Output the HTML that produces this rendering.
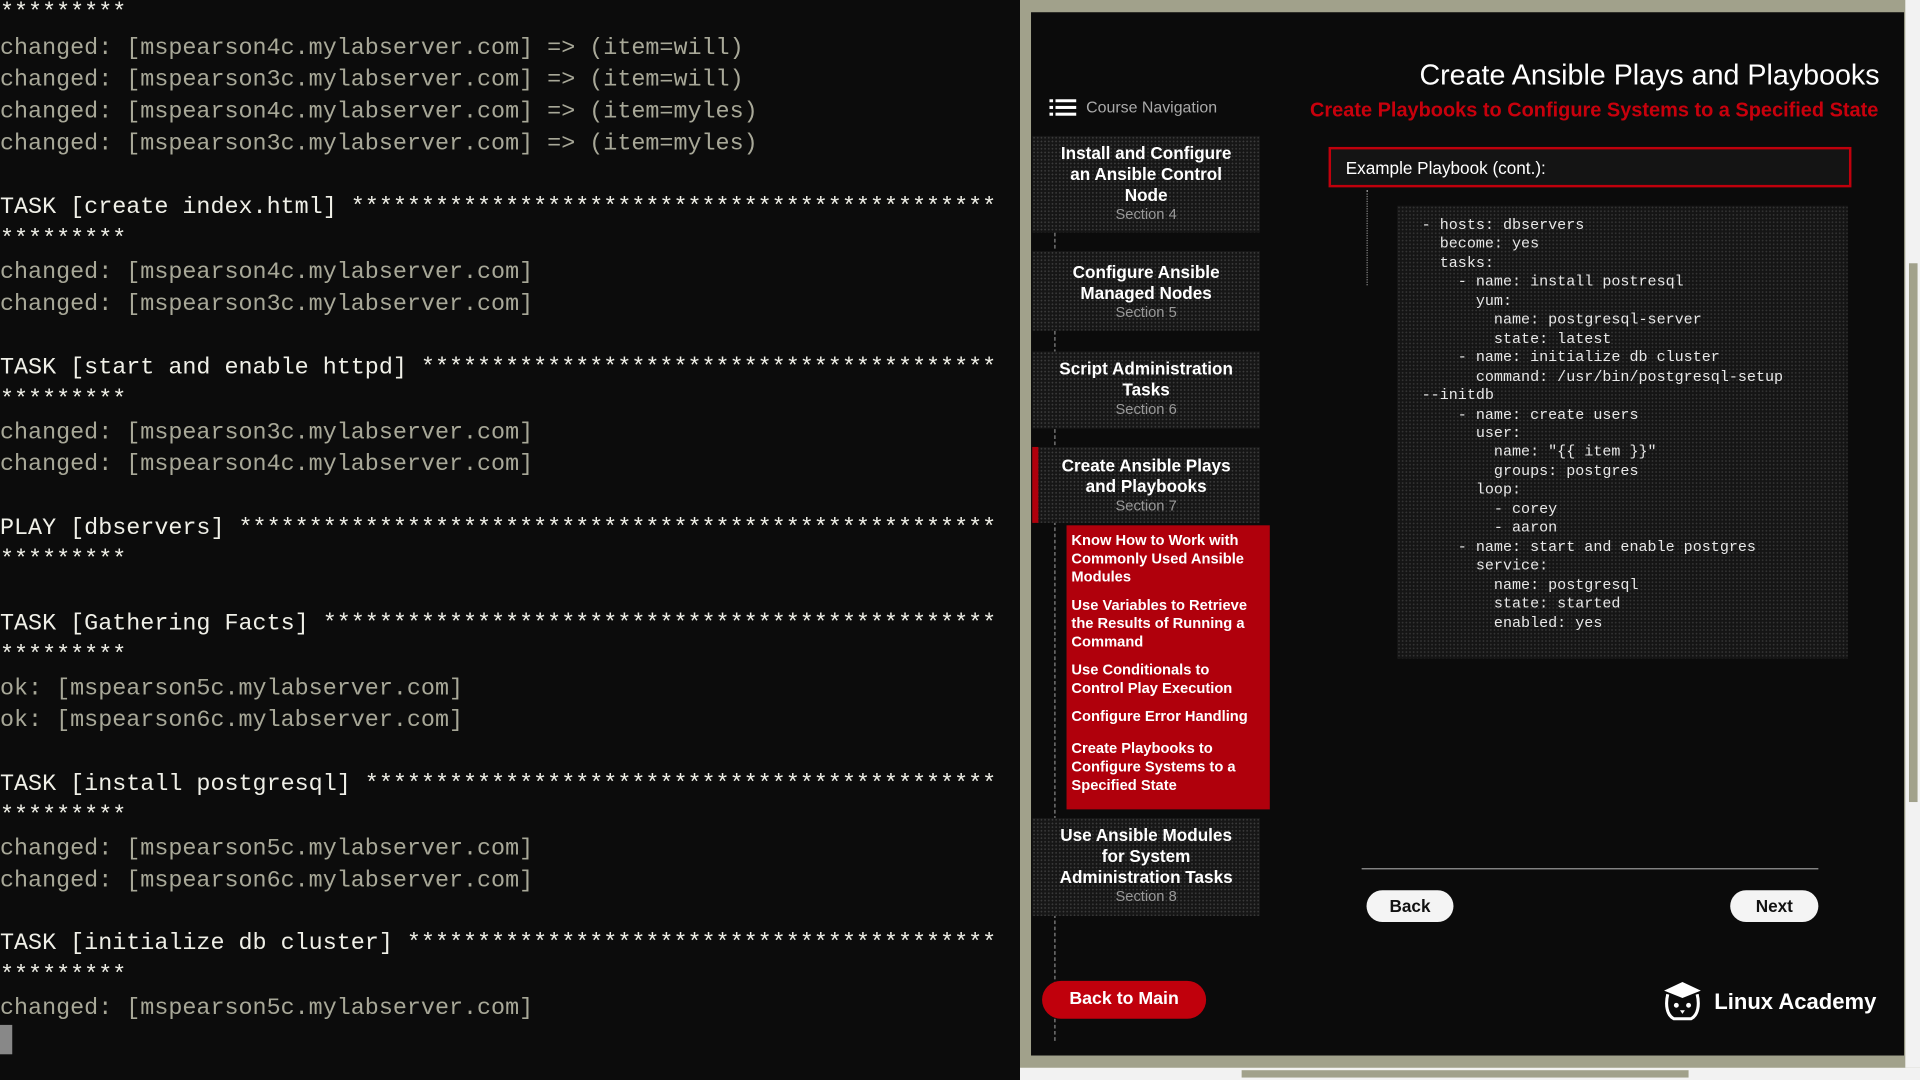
<!DOCTYPE html>
<html><head><meta charset="utf-8"><style>
*{margin:0;padding:0;box-sizing:border-box}
html,body{width:1920px;height:1080px;overflow:hidden;background:#0c0c0c}
#w{position:absolute;left:0;top:0;width:1568px;height:882px;transform:scale(1.22449);transform-origin:0 0;font-family:"Liberation Sans",sans-serif}
.t{position:absolute;left:0;font-family:"Liberation Mono",monospace;font-size:19.1px;line-height:24px;white-space:pre;color:#f0f0e8;margin-top:1px}
.s{margin-top:4px}
.g{color:#a8a898}
.a{position:absolute}
.nav{position:absolute;left:843px;width:186px;background:#161616;background-image:radial-gradient(#3a3a3a 0.6px,transparent 0.8px);background-size:3px 3px;text-align:center;color:#fff;font-weight:bold;font-size:14px;line-height:17px}
.nav span{display:block;font-weight:normal;color:#999;font-size:12px;line-height:15px}
.sub{position:absolute;left:871px;top:429px;width:166px;height:232px;background:#b0000c;color:#fff;font-weight:bold;font-size:12px;line-height:15px;padding:5px 0 0 4px}
.sub div{margin-bottom:8px}
.btn{position:absolute;background:#f4f4f4;border-radius:14px;color:#111;font-weight:bold;font-size:14px;text-align:center;line-height:26px}
</style></head><body><div id="w">
<div class="t" style="top:-3px">*********</div>
<div class="t g" style="top:26px">changed: [mspearson4c.mylabserver.com] =&gt; (item=will)</div>
<div class="t g" style="top:52px">changed: [mspearson3c.mylabserver.com] =&gt; (item=will)</div>
<div class="t g" style="top:78px">changed: [mspearson4c.mylabserver.com] =&gt; (item=myles)</div>
<div class="t g" style="top:104px">changed: [mspearson3c.mylabserver.com] =&gt; (item=myles)</div>
<div class="t" style="top:156px">TASK [create index.html] **********************************************</div>
<div class="t s" style="top:179px">*********</div>
<div class="t g" style="top:209px">changed: [mspearson4c.mylabserver.com]</div>
<div class="t g" style="top:235px">changed: [mspearson3c.mylabserver.com]</div>
<div class="t" style="top:287px">TASK [start and enable httpd] *****************************************</div>
<div class="t s" style="top:310px">*********</div>
<div class="t g" style="top:340px">changed: [mspearson3c.mylabserver.com]</div>
<div class="t g" style="top:366px">changed: [mspearson4c.mylabserver.com]</div>
<div class="t" style="top:418px">PLAY [dbservers] ******************************************************</div>
<div class="t s" style="top:441px">*********</div>
<div class="t" style="top:496px">TASK [Gathering Facts] ************************************************</div>
<div class="t s" style="top:519px">*********</div>
<div class="t g" style="top:549px">ok: [mspearson5c.mylabserver.com]</div>
<div class="t g" style="top:575px">ok: [mspearson6c.mylabserver.com]</div>
<div class="t" style="top:627px">TASK [install postgresql] *********************************************</div>
<div class="t s" style="top:650px">*********</div>
<div class="t g" style="top:680px">changed: [mspearson5c.mylabserver.com]</div>
<div class="t g" style="top:706px">changed: [mspearson6c.mylabserver.com]</div>
<div class="t" style="top:757px">TASK [initialize db cluster] ******************************************</div>
<div class="t s" style="top:780px">*********</div>
<div class="t g" style="top:810px">changed: [mspearson5c.mylabserver.com]</div>
<div class="a" style="left:0;top:837px;width:10px;height:24px;background:#888"></div>

<div class="a" style="left:833px;top:0;width:735px;height:882px;background:#a1a18b"></div>
<div class="a" style="left:833px;top:872px;width:735px;height:10px;background:#f2f2f2"></div>
<div class="a" style="left:1014px;top:874px;width:365px;height:6px;background:#a1a18b"></div>
<div class="a" style="left:1556px;top:0;width:12px;height:872px;background:#f2f2f2"></div>
<div class="a" style="left:1559px;top:215px;width:7px;height:440px;background:#a1a18b"></div>
<div class="a" style="left:842px;top:10px;width:713px;height:852px;background:#0b0b0b"></div>

<div class="a" style="right:33px;top:48px;color:#fff;font-size:23.4px;white-space:nowrap">Create Ansible Plays and Playbooks</div>
<div class="a" style="right:34px;top:81px;color:#c8000c;font-size:16.3px;font-weight:bold;white-space:nowrap">Create Playbooks to Configure Systems to a Specified State</div>

<svg class="a" style="left:857px;top:81px" width="22" height="14"><g fill="#fff"><rect x="0" y="0" width="3" height="2.5"/><rect x="5" y="0" width="17" height="2.5"/><rect x="0" y="5.5" width="3" height="2.5"/><rect x="5" y="5.5" width="17" height="2.5"/><rect x="0" y="11" width="3" height="2.5"/><rect x="5" y="11" width="17" height="2.5"/></g></svg>
<div class="a" style="left:887px;top:80px;color:#aaa;font-size:13px">Course Navigation</div>

<div class="a" style="left:861px;top:190px;height:660px;border-left:1px dashed #888"></div>
<div class="nav" style="top:111px;height:79px;padding-top:6px">Install and Configure<br>an Ansible Control<br>Node<span>Section 4</span></div>
<div class="nav" style="top:205px;height:65px;padding-top:9px">Configure Ansible<br>Managed Nodes<span>Section 5</span></div>
<div class="nav" style="top:287px;height:63px;padding-top:6px">Script Administration<br>Tasks<span>Section 6</span></div>
<div class="nav" style="top:365px;height:62px;padding-top:7px">Create Ansible Plays<br>and Playbooks<span>Section 7</span></div>
<div class="a" style="left:843px;top:365px;width:5px;height:62px;background:#b0000c"></div>
<div class="sub"><div>Know How to Work with<br>Commonly Used Ansible<br>Modules</div><div>Use Variables to Retrieve<br>the Results of Running a<br>Command</div><div>Use Conditionals to<br>Control Play Execution</div><div style="margin-bottom:11px">Configure Error Handling</div><div>Create Playbooks to<br>Configure Systems to a<br>Specified State</div></div>
<div class="nav" style="top:668px;height:80px;padding-top:6px">Use Ansible Modules<br>for System<br>Administration Tasks<span>Section 8</span></div>

<div class="a" style="left:851px;top:801px;width:134px;height:31px;border-radius:16px;background:#c0000c;color:#fff;font-size:14.5px;font-weight:bold;text-align:center;line-height:31px">Back to Main</div>

<div class="a" style="left:1085px;top:120px;width:427px;height:33px;border:2px solid #c0000c;background:#141414;color:#fff;font-size:14px;line-height:31px;padding-left:12px">Example Playbook (cont.):</div>
<div class="a" style="left:1116px;top:155px;height:78px;border-left:1px dotted #888"></div>
<div class="a" style="left:1141px;top:168px;width:368px;height:370px;background:#151515;background-image:radial-gradient(#333 0.6px,transparent 0.8px);background-size:3px 3px"></div>
<pre class="a" style="left:1161px;top:177px;color:#e8e8e8;font-family:'Liberation Mono',monospace;font-size:12.3px;line-height:15.45px">- hosts: dbservers
  become: yes
  tasks:
    - name: install postresql
      yum:
        name: postgresql-server
        state: latest
    - name: initialize db cluster
      command: /usr/bin/postgresql-setup
--initdb
    - name: create users
      user:
        name: "{{ item }}"
        groups: postgres
      loop:
        - corey
        - aaron
    - name: start and enable postgres
      service:
        name: postgresql
        state: started
        enabled: yes</pre>

<div class="a" style="left:1112px;top:709px;width:373px;height:1px;background:#999"></div>
<div class="btn" style="left:1116px;top:727px;width:71px">Back</div>
<div class="btn" style="left:1413px;top:727px;width:72px">Next</div>

<svg class="a" style="left:1357px;top:800px" width="34" height="34" viewBox="0 0 34 34"><path d="M17 2 L32 9 L17 15 L2 9Z" fill="#fff"/><path d="M5 12 C3 20 4 29 10 32 L24 32 C30 29 31 20 29 12" fill="none" stroke="#fff" stroke-width="2.5"/><circle cx="12" cy="21" r="2" fill="#fff"/><circle cx="22" cy="21" r="2" fill="#fff"/><path d="M15 25 L17 28 L19 25Z" fill="#fff"/></svg>
<div class="a" style="left:1400px;top:808px;color:#fff;font-size:18px;font-weight:bold">Linux Academy</div>
</div></body></html>
